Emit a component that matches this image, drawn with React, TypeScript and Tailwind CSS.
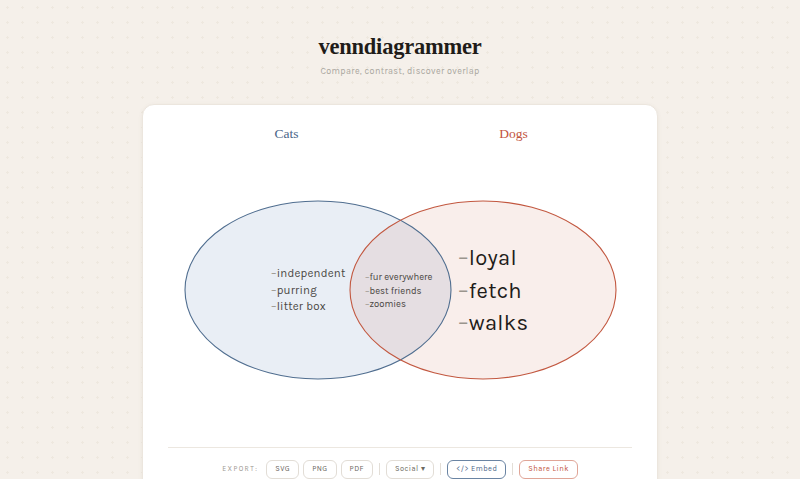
import React from "react";

const sans = "font-['Karla','Noto_Sans','Lato',sans-serif]";

function Btn({ children, cls }: { children: React.ReactNode; cls?: string }) {
  return (
    <button
      className={`h-[19px] rounded-[6px] border px-[8px] text-[7.5px] tracking-[0.06em] leading-none ${cls ?? "border-[#e2ddd6] text-[#6b6760]"}`}
    >
      {children}
    </button>
  );
}

function Sep() {
  return <span className="mx-[6px] h-[12px] w-px bg-[#e3ded7]" />;
}

export default function App() {
  return (
    <div
      className={`min-h-[479px] w-full overflow-hidden bg-[#f5f0ea] bg-[radial-gradient(#eee8df_1px,transparent_1.2px)] bg-[size:15px_15px] ${sans}`}
    >
      <div className="flex flex-col items-center pt-[33px]">
        <h1 className="font-['Liberation_Serif','DejaVu_Serif',serif] text-[22.5px] font-bold leading-[28px] tracking-[-0.01em] text-[#1f1c19]">
          venndiagrammer
        </h1>
        <p className="mt-[4px] text-[9px] tracking-[0.04em] text-[#aaa79f]">
          Compare, contrast, discover overlap
        </p>
      </div>

      <div className="mx-auto mt-[25px] w-[516px] rounded-t-[12px] border border-[#ece6de] bg-white pb-[2px] shadow-[0_1px_4px_rgba(120,100,80,0.08)]">
        <div className="grid grid-cols-2 px-[30px] pt-[20px] pb-[2px] text-center font-['Liberation_Serif','DejaVu_Serif',serif] text-[13.5px] leading-[18px]">
          <span className="text-[#4a6587]">Cats</span>
          <span className="text-[#c2543d]">Dogs</span>
        </div>

        <svg width="514" height="301" viewBox="0 0 514 301" className="block">
          <ellipse cx="175" cy="145" rx="133" ry="89" fill="#e9eef5" />
          <ellipse cx="340" cy="145" rx="133" ry="89" fill="#c8553d" fillOpacity="0.1" />
          <ellipse cx="175" cy="145" rx="133" ry="89" fill="none" stroke="#4f6d8f" strokeWidth="1.1" />
          <ellipse cx="340" cy="145" rx="133" ry="89" fill="none" stroke="#c2573f" strokeWidth="1.1" />

          <g fontSize="11.5" fill="#4a4743" letterSpacing="0.2">
            <text x="128" y="132"><tspan fill="#9a958d">–</tspan>independent</text>
            <text x="128" y="149"><tspan fill="#9a958d">–</tspan>purring</text>
            <text x="128" y="165"><tspan fill="#9a958d">–</tspan>litter box</text>
          </g>
          <g fontSize="9.5" fill="#4a4743">
            <text x="222" y="135"><tspan fill="#9a958d">–</tspan>fur everywhere</text>
            <text x="222" y="149"><tspan fill="#9a958d">–</tspan>best friends</text>
            <text x="222" y="162"><tspan fill="#9a958d">–</tspan>zoomies</text>
          </g>
          <g fontSize="22" fill="#1f1c19" letterSpacing="0.3">
            <text x="315" y="120"><tspan fill="#9a958d">–</tspan>loyal</text>
            <text x="315" y="153"><tspan fill="#9a958d">–</tspan>fetch</text>
            <text x="315" y="185"><tspan fill="#9a958d">–</tspan>walks</text>
          </g>
        </svg>

        <div className="mx-[25px] mt-[1px] h-px bg-[#ece7e0]" />

        <div className="flex items-center justify-center pt-[12px] pb-[8px]">
          <span className="mr-[8px] text-[7px] tracking-[0.2em] text-[#9b978f]">EXPORT:</span>
          <div className="flex items-center gap-[4px]">
            <Btn>SVG</Btn>
            <Btn>PNG</Btn>
            <Btn>PDF</Btn>
          </div>
          <Sep />
          <Btn>Social ▾</Btn>
          <Sep />
          <Btn cls="border-[#6a84a3] text-[#4a6587]">&lt;/&gt; Embed</Btn>
          <Sep />
          <Btn cls="border-[#e0a597] text-[#c2543d]">Share Link</Btn>
        </div>
      </div>
    </div>
  );
}
